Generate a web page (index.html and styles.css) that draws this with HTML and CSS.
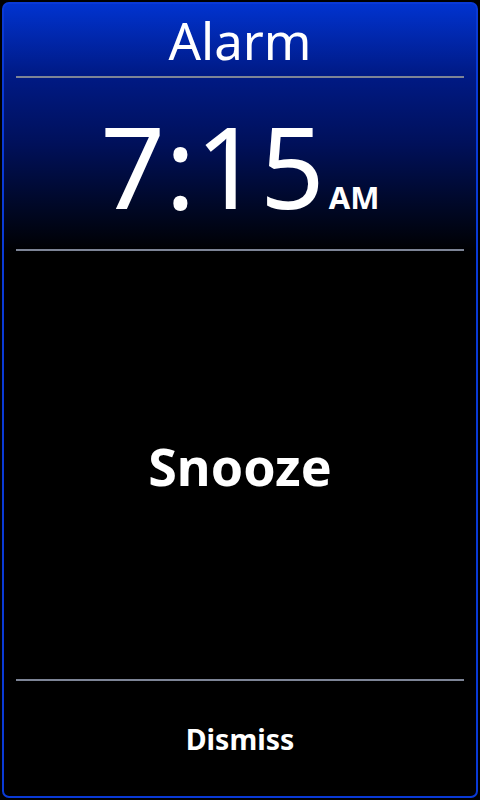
FILE: index.html
```html
<!DOCTYPE html>
<html>
<head>
<meta charset="utf-8">
<link rel="stylesheet" href="styles.css">
</head>
<body>
<div class="panel">
  <div class="title">Alarm</div>
  <div class="divider"></div>
  <div class="clock"><span class="time">7:15</span><span class="ampm">AM</span></div>
  <div class="divider"></div>
  <div class="snooze">Snooze</div>
  <div class="divider"></div>
  <div class="dismiss">Dismiss</div>
</div>
</body>
</html>
```
FILE: styles.css
```css
html, body {
  margin: 0;
  padding: 0;
  background: #000;
  width: 480px;
  height: 800px;
  overflow: hidden;
}
body {
  padding: 2px;
  box-sizing: border-box;
  font-family: "Noto Sans", "Open Sans", sans-serif;
  color: #fff;
}
.panel {
  height: 796px;
  box-sizing: border-box;
  border: 2px solid #0a3ad6;
  border-radius: 7px;
  background: linear-gradient(to bottom, #0133cf 0px, #001a86 70px, #00105a 140px, #000828 200px, #000 250px, #000 100%);
  display: flex;
  flex-direction: column;
  padding: 0 12px;
}
.divider {
  height: 2px;
  background: #7d8496;
  flex: none;
}
.title {
  height: 72px;
  display: flex;
  align-items: center;
  justify-content: center;
  font-size: 51px;
  line-height: 1;
  flex: none;
}
.clock {
  height: 171px;
  display: flex;
  align-items: baseline;
  justify-content: center;
  flex: none;
}
.time {
  font-size: 113px;
  line-height: 175px;
}
.ampm {
  font-size: 31px;
  font-weight: bold;
  margin-left: 4px;
}
.snooze {
  flex: 1;
  display: flex;
  align-items: center;
  justify-content: center;
  font-size: 52px;
  font-weight: bold;
}
.dismiss {
  height: 115px;
  display: flex;
  align-items: center;
  justify-content: center;
  font-size: 28.5px;
  font-weight: bold;
  flex: none;
}
```
